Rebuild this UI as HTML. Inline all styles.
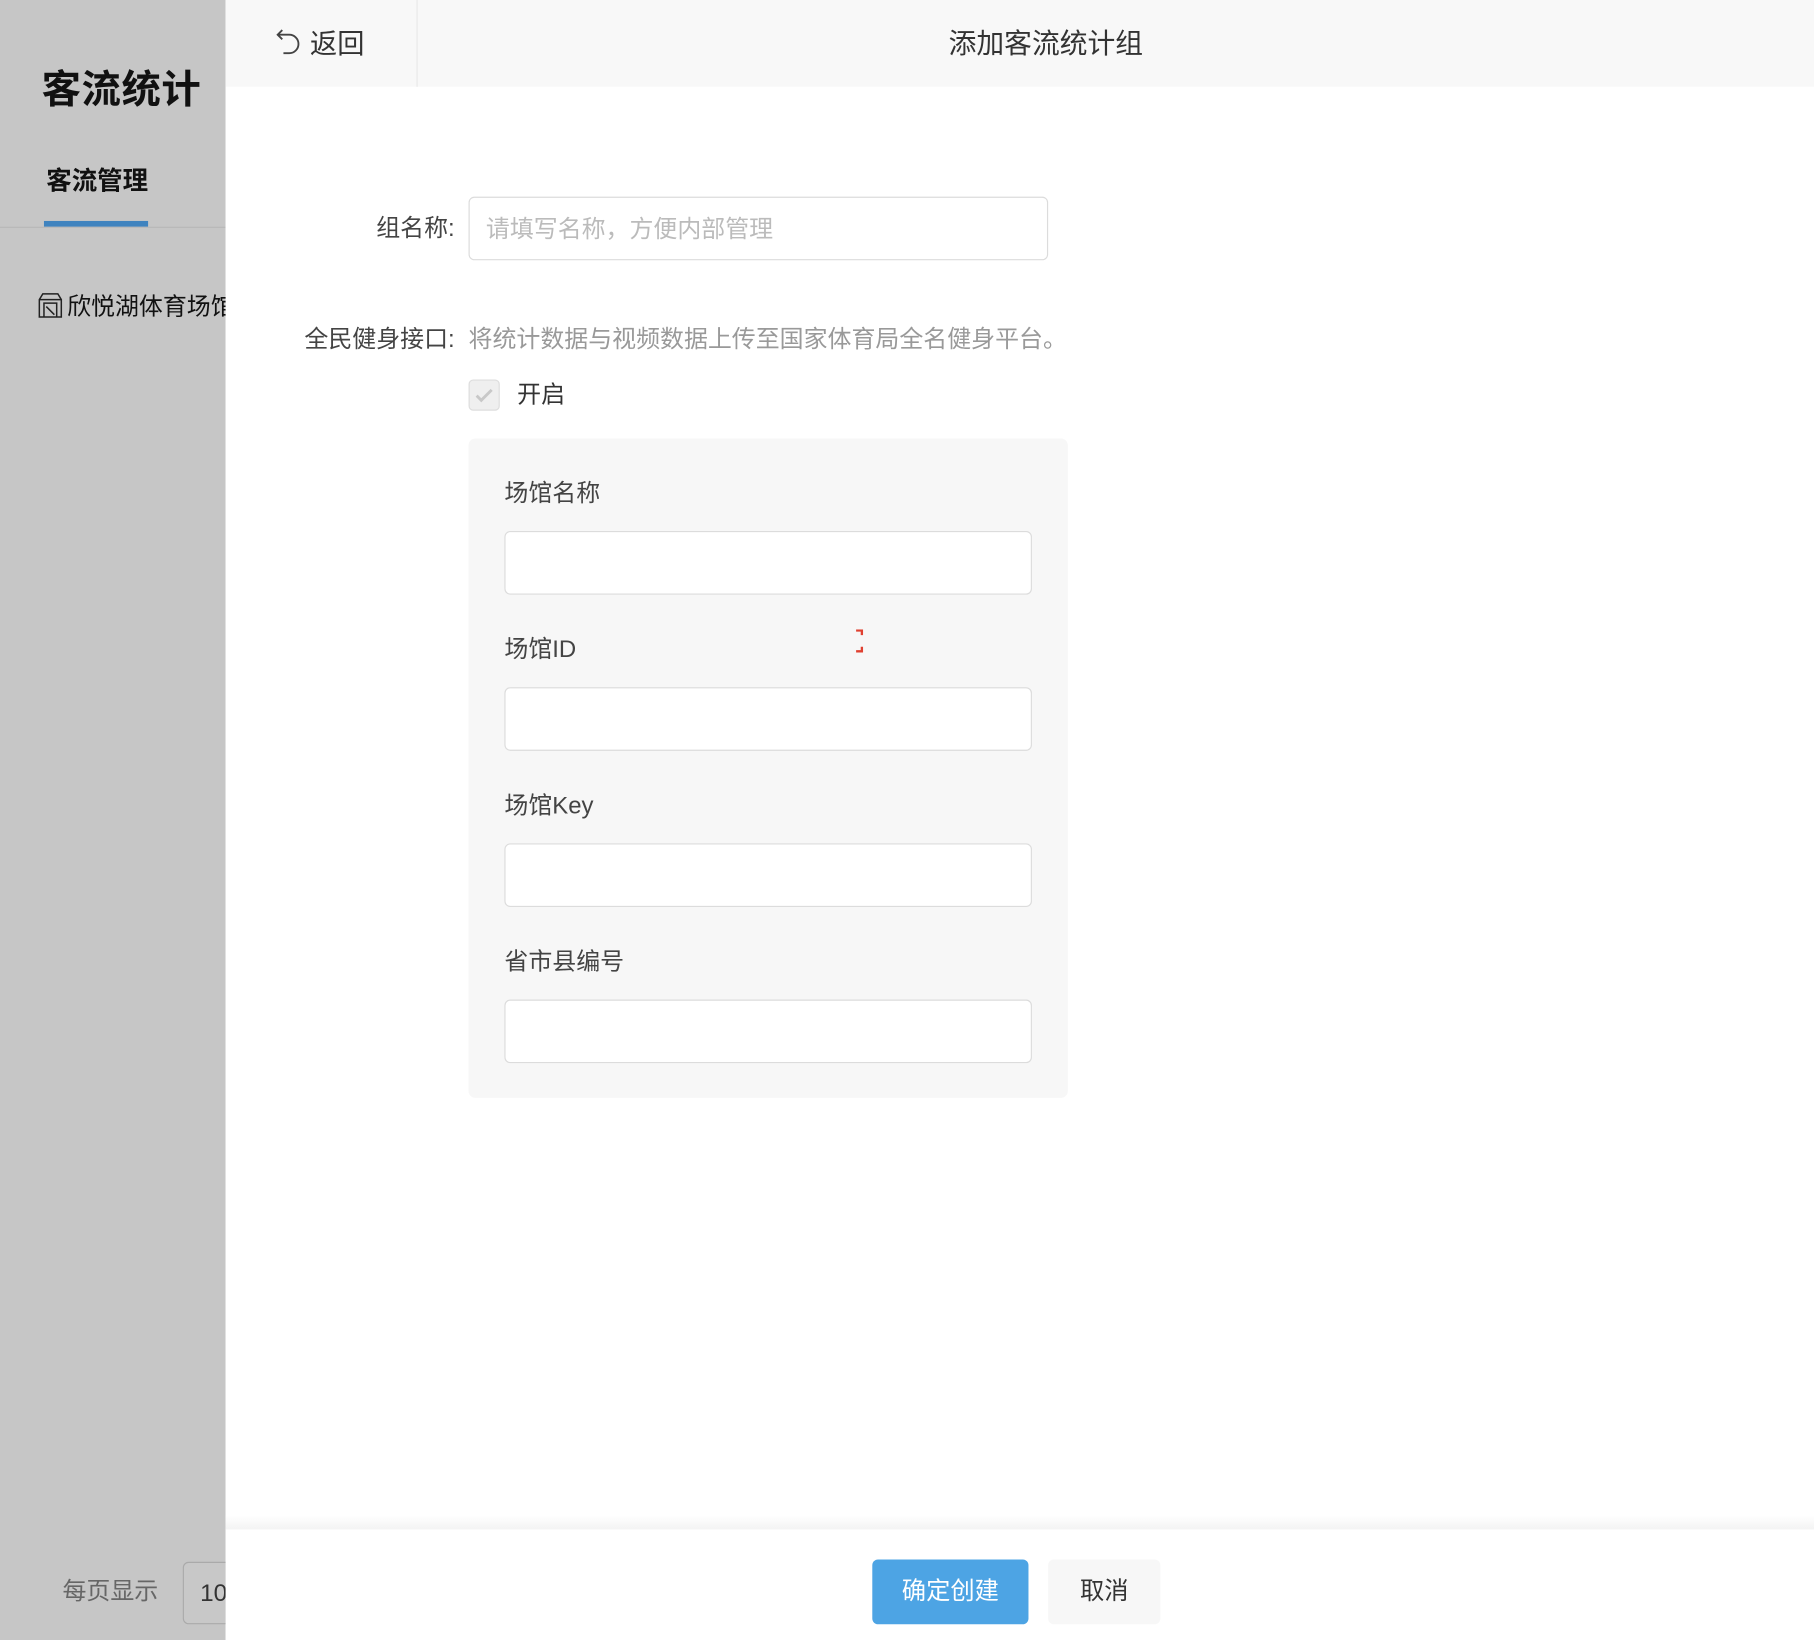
<!DOCTYPE html>
<html><head><meta charset="utf-8"><style>
*{margin:0;padding:0;box-sizing:border-box}
html,body{width:1814px;height:1640px;overflow:hidden;background:#fff}
body{font-family:"Liberation Sans","Noto Sans CJK SC",sans-serif;color:#333}
#s{position:absolute;left:0;top:0;width:1568px;height:1418px;transform:scale(1.15689);transform-origin:0 0}
.a{position:absolute;white-space:nowrap}
.inp{position:absolute;background:#fff;border:1.5px solid #dcdcdc;border-radius:5px}
.lb{font-size:20.7px;color:#444;line-height:1}
</style></head><body><div id="s">
<div class="a" style="left:0;top:0;width:195px;height:1418px;background:#c6c6c6"></div>
<div class="a" style="left:36px;top:50px;font-size:34px;font-weight:bold;color:#111;letter-spacing:0.5px">客流统计</div>
<div class="a" style="left:40px;top:139px;font-size:22px;font-weight:bold;color:#111">客流管理</div>
<div class="a" style="left:38px;top:191px;width:90px;height:5px;background:#3f83bf"></div>
<div class="a" style="left:0;top:196px;width:195px;height:1px;background:#b8b8b8"></div>
<svg class="a" style="left:33px;top:253px" width="21" height="22" viewBox="0 0 21 22" fill="none" stroke="#222" stroke-width="1.3"><path d="M1 21V6L4 1H17L20 6V21ZM1 6H20M5 21V9H16V21M7 12L14 19"/></svg>
<div class="a" style="left:58px;top:248px;font-size:20.7px;color:#111">欣悦湖体育场馆</div>
<div class="a" style="left:54px;top:1358px;font-size:20.7px;color:#666">每页显示</div>
<div class="a" style="left:158px;top:1350px;width:60px;height:54px;border:1.5px solid #aaa;border-radius:5px;background:#c8c8c8;font-size:21px;color:#333;padding:15px 0 0 14px">10</div>

<div class="a" style="left:195px;top:0;width:1373px;height:1418px;background:#fff"></div>
<div class="a" style="left:195px;top:0;width:1373px;height:75px;background:#f8f8f8"></div>
<div class="a" style="left:360px;top:0;width:1px;height:75px;background:#e8e8e8"></div>
<svg class="a" style="left:237px;top:24px" width="24" height="24" viewBox="0 0 24 24" fill="none" stroke="#444" stroke-width="1.6"><path d="M7 2L3 6L7 10M3 6H13A8 8 0 0 1 13 22H8"/></svg>
<div class="a" style="left:268px;top:19px;font-size:23.5px;color:#333">返回</div>
<div class="a" style="left:820px;top:18px;font-size:24px;color:#333">添加客流统计组</div>

<div class="a lb" style="right:1175px;top:188px">组名称:</div>
<div class="inp" style="left:405px;top:170px;width:501px;height:55px;font-size:20.7px;color:#bbb;padding:10px 0 0 14px">请填写名称，方便内部管理</div>
<div class="a lb" style="right:1175px;top:284px">全民健身接口:</div>
<div class="a lb" style="left:405px;top:284px;color:#999">将统计数据与视频数据上传至国家体育局全名健身平台。</div>
<div class="a" style="left:405px;top:328px;width:27px;height:27px;background:#efefef;border:1.5px solid #ddd;border-radius:4px"></div>
<svg class="a" style="left:410px;top:334px" width="17" height="15" viewBox="0 0 17 15" fill="none" stroke="#c8c8c8" stroke-width="2.5"><path d="M2 8L6 12L15 3"/></svg>
<div class="a lb" style="left:447px;top:332px;color:#333">开启</div>

<div class="a" style="left:405px;top:379px;width:518px;height:570px;background:#f7f7f7;border-radius:6px"></div>
<div class="a lb" style="left:436px;top:417px">场馆名称</div>
<div class="inp" style="left:436px;top:459px;width:456px;height:55px"></div>
<div class="a lb" style="left:436px;top:552px">场馆ID</div>
<div class="inp" style="left:436px;top:594px;width:456px;height:55px"></div>
<div class="a lb" style="left:436px;top:687px">场馆Key</div>
<div class="inp" style="left:436px;top:729px;width:456px;height:55px"></div>
<div class="a lb" style="left:436px;top:822px">省市县编号</div>
<div class="inp" style="left:436px;top:864px;width:456px;height:55px"></div>
<svg class="a" style="left:738px;top:544px" width="10" height="20" viewBox="0 0 10 20" fill="none" stroke="#e04030" stroke-width="2"><path d="M2 1H7V5M7 15V19H2"/></svg>

<div class="a" style="left:195px;top:1310px;width:1373px;height:12px;background:linear-gradient(#fff,#f3f3f3)"></div>
<div class="a" style="left:754px;top:1348px;width:135px;height:56px;background:#4da4e4;border-radius:5px;color:#fff;font-size:21px;text-align:center;line-height:56px">确定创建</div>
<div class="a" style="left:906px;top:1348px;width:97px;height:56px;background:#f7f7f7;border-radius:5px;color:#333;font-size:21px;text-align:center;line-height:56px">取消</div>
</div></body></html>
